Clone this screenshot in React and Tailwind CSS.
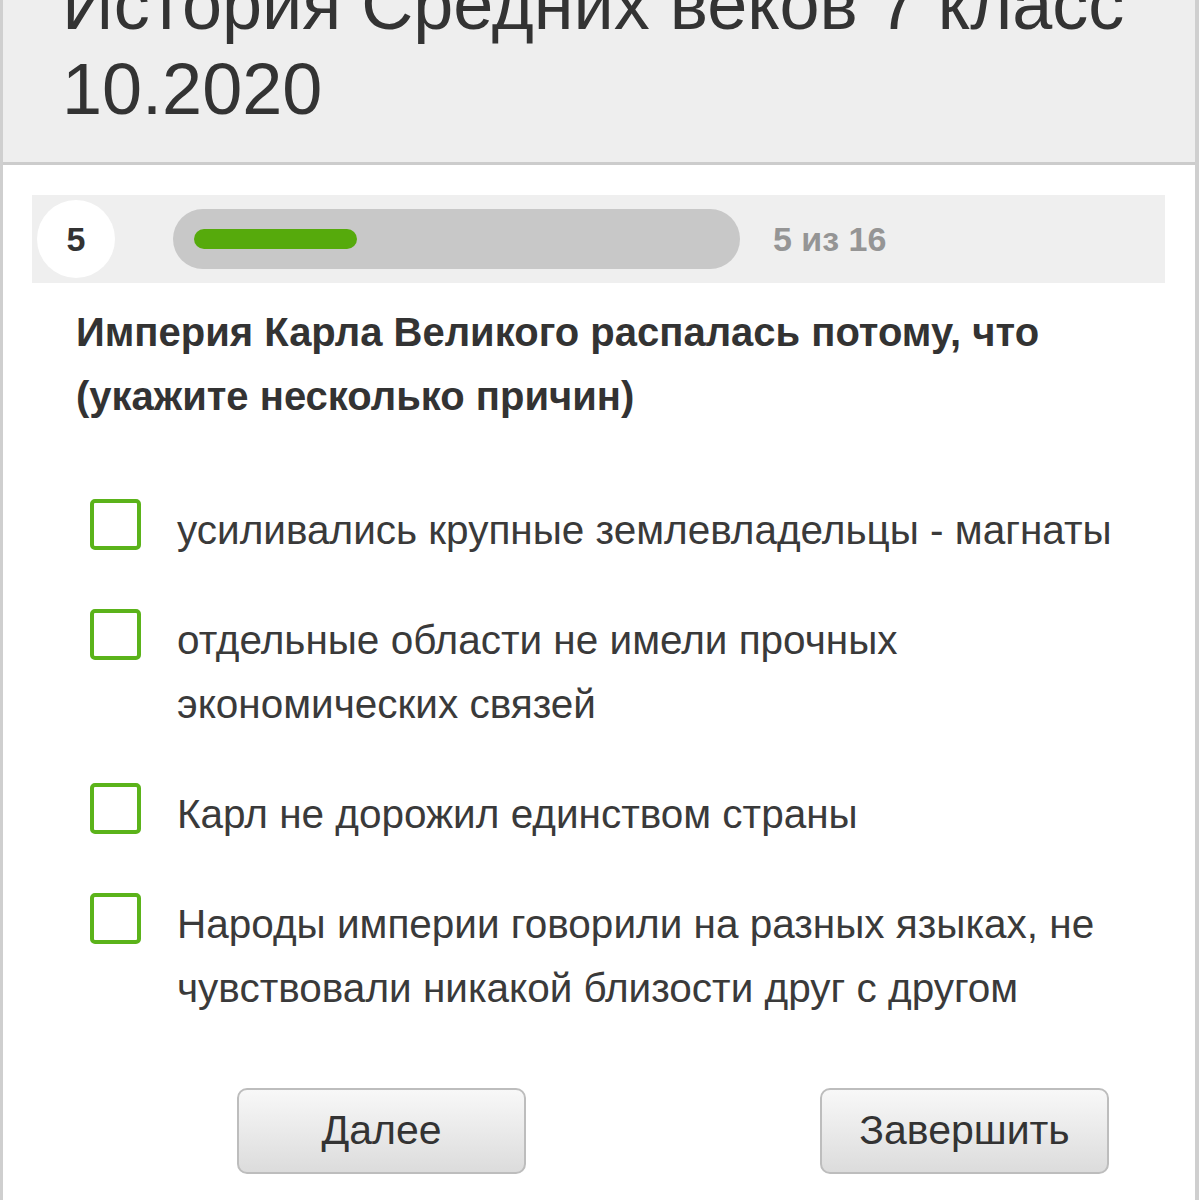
import React, { useState } from 'react';

const options = [
  'усиливались крупные землевладельцы - магнаты',
  'отдельные области не имели прочных экономических связей',
  'Карл не дорожил единством страны',
  'Народы империи говорили на разных языках, не чувствовали никакой близости друг с другом',
];

const App = () => {
  const [checked, setChecked] = useState([]);

  const toggle = (i) => {
    setChecked((prev) => (prev.includes(i) ? prev.filter((x) => x !== i) : [...prev, i]));
  };

  return (
    <div className="min-h-screen bg-white font-['Liberation_Sans',Arial,sans-serif] overflow-hidden">
      <div className="min-h-[1200px] border-l-[3px] border-r-[4px] border-[#cfcfcf]">
        {/* Header */}
        <div className="bg-[#eeeeee] border-b-[3px] border-[#cccccc] pl-[59px] pr-[40px] pb-[30px] pt-px">
          <h1 className="mt-[-39px] text-[72px] leading-[85px] text-[#333333]">
            История Средних веков 7 класс 10.2020
          </h1>
        </div>

        <div className="pl-[29px] pr-[30px]">
          {/* Progress strip */}
          <div className="mt-[30px] h-[88px] bg-[#efefef] flex items-center">
            <div className="ml-[5px] w-[78px] h-[78px] rounded-full bg-white flex items-center justify-center text-[34px] font-bold text-[#333]">
              5
            </div>
            <div className="ml-[58px] w-[567px] h-[60px] rounded-full bg-[#c8c8c8] flex items-center px-[21px]">
              <div className="w-[163px] h-[20px] rounded-full bg-[#56aa0c]" />
            </div>
            <div className="ml-[33px] text-[34px] font-bold text-[#959595]">5 из 16</div>
          </div>

          {/* Question */}
          <div className="mt-[17px] pl-[44px] pr-[40px] text-[40px] leading-[64px] font-bold text-[#333]">
            Империя Карла Великого распалась потому, что (укажите несколько причин)
          </div>

          {/* Options */}
          <div className="mt-[70px] flex flex-col gap-[46px]">
            {options.map((opt, i) => (
              <label key={i} className="flex items-start cursor-pointer" onClick={() => toggle(i)}>
                <span
                  className={`ml-[58px] mt-px shrink-0 w-[51px] h-[51px] rounded-[5px] border-[4px] border-[#5bb31a] ${
                    checked.includes(i) ? 'bg-[#5bb31a]' : 'bg-white'
                  }`}
                />
                <span className="ml-[36px] pr-[25px] flex-1 text-[40.5px] leading-[64px] text-[#3a3a3a]">{opt}</span>
              </label>
            ))}
          </div>

          {/* Buttons */}
          <div className="mt-[68px] flex">
            <button className="ml-[205px] w-[289px] h-[86px] rounded-[10px] border-2 border-[#bdbdbd] bg-gradient-to-b from-[#f8f8f8] to-[#dcdcdc] text-[41px] text-[#333]">
              Далее
            </button>
            <button className="ml-[294px] w-[289px] h-[86px] rounded-[10px] border-2 border-[#bdbdbd] bg-gradient-to-b from-[#f8f8f8] to-[#dcdcdc] text-[41px] text-[#333]">
              Завершить
            </button>
          </div>
        </div>
      </div>
    </div>
  );
};

export default App;
